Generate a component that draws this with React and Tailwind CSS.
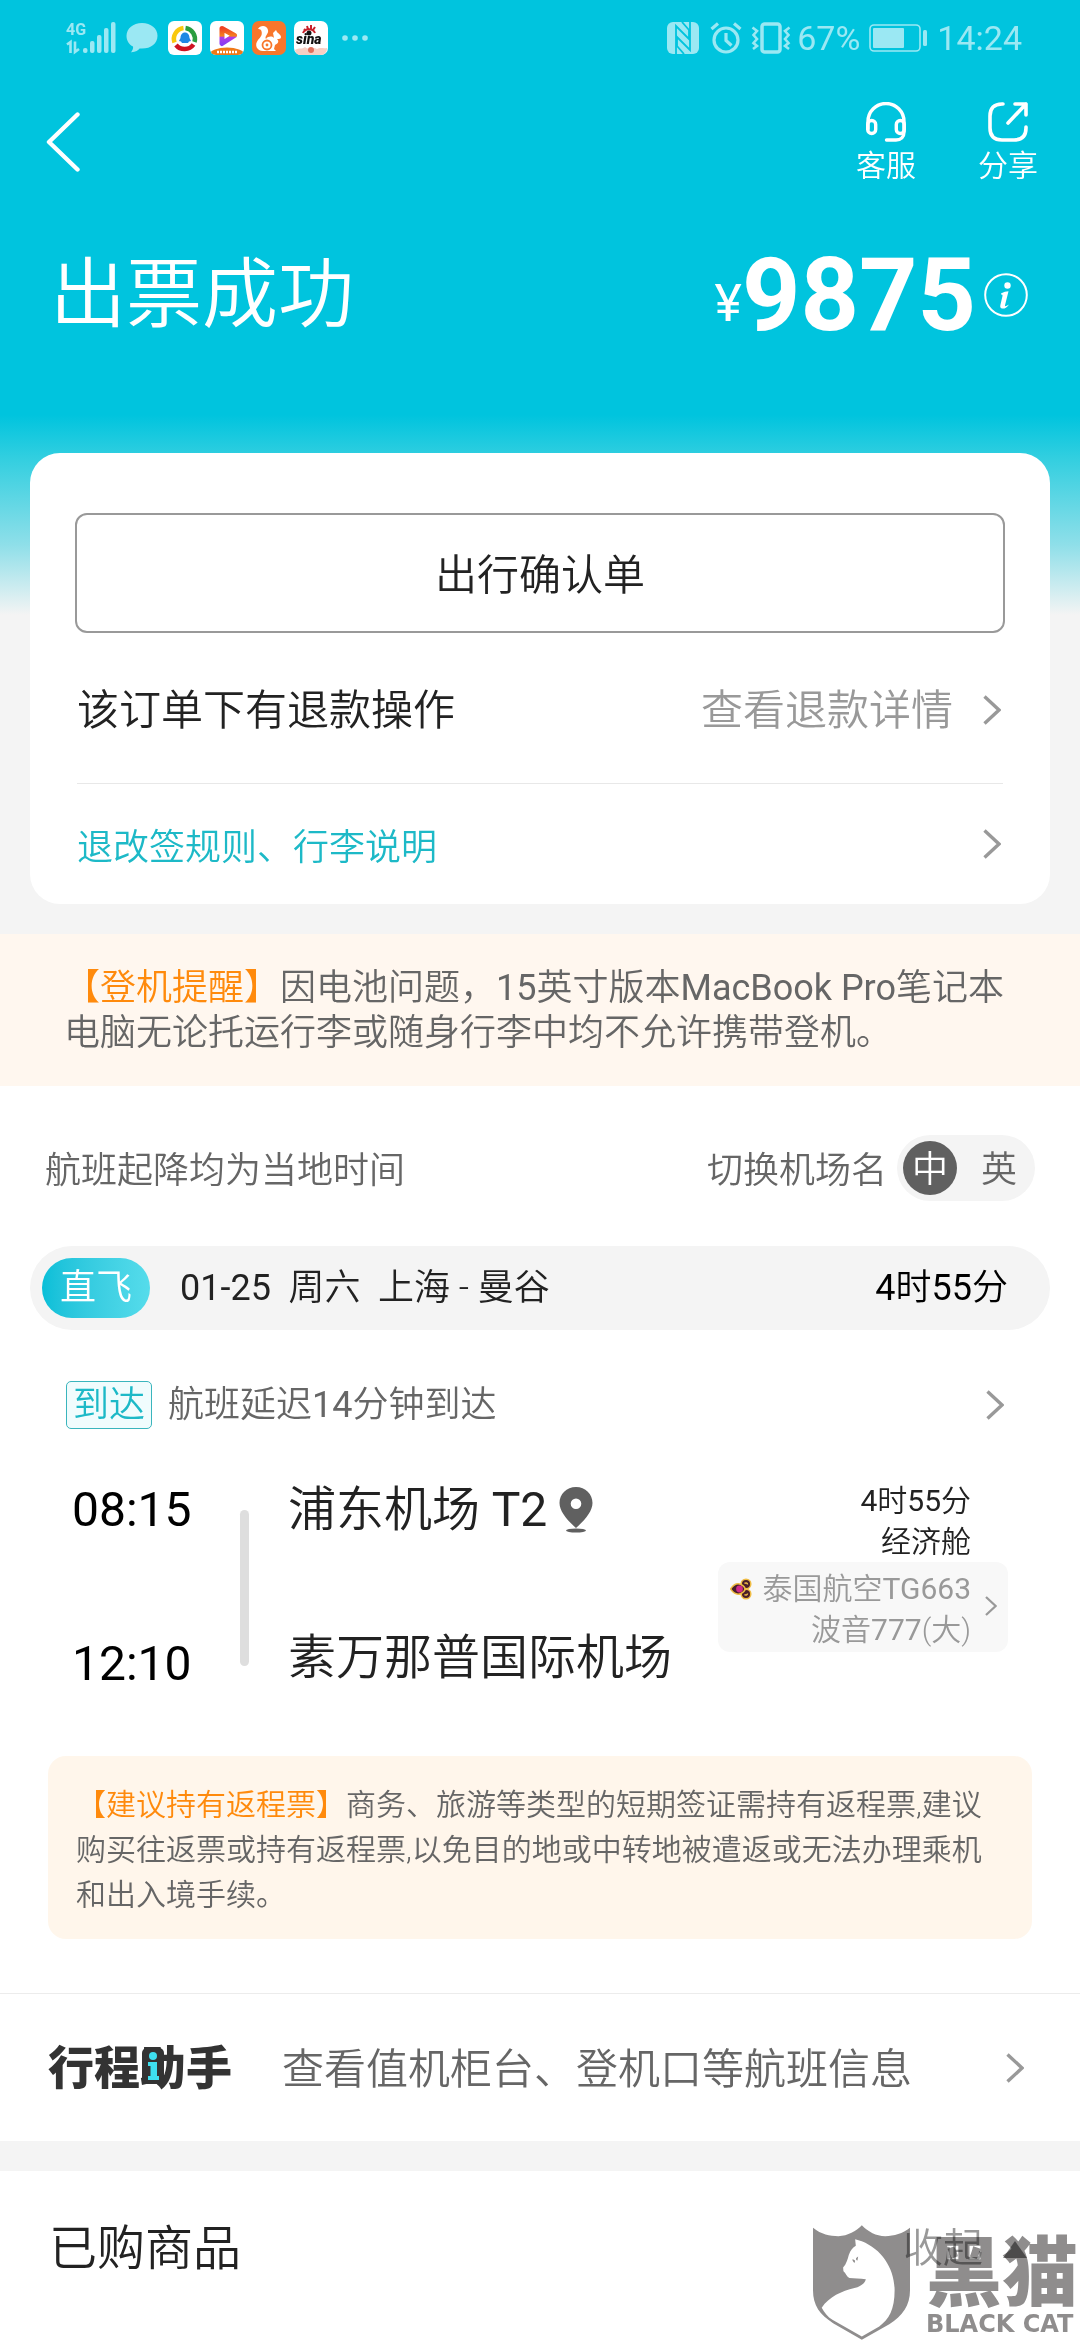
import { useState } from "react";

/* CJK glyphs use the page's lighter weight; Latin letters and digits keep the regular one. */
function Mixed({ children }) {
  return children
    .split(/([0-9A-Za-z][0-9A-Za-z\-]*)/)
    .map((part, i) =>
      i % 2 ? (
        <span key={i} className="font-normal">{part}</span>
      ) : (
        part
      )
    );
}

function Chevron({ className = "h-[30px] w-[18px]" }) {
  return (
    <svg viewBox="0 0 18 30" className={className} fill="none" stroke="#999" strokeWidth="3.4" aria-hidden="true">
      <path d="M1.5 1.5 16 15 1.5 28.5" />
    </svg>
  );
}

function SignalIcon() {
  return (
    <svg viewBox="0 0 50 34" className="h-[34px] w-[50px]" aria-label="4G">
      <text x="0" y="14" fontFamily="Roboto, sans-serif" fontWeight="700" fontSize="16" fill="#9be8f3">4G</text>
      <g stroke="#9be8f3" strokeWidth="2.6" fill="none">
        <path d="M1 23.500 4.500 21V32M9 20.500V31l4-3" />
      </g>
      <g fill="#9be8f3">
        <rect x="17" y="27" width="4.500" height="5" rx="2" />
        <rect x="24" y="20" width="4.500" height="12" rx="2" />
        <rect x="31" y="14" width="4.500" height="18" rx="2" />
        <rect x="38" y="7" width="4.500" height="25" rx="2" />
        <rect x="45" y="1" width="4.500" height="31" rx="2" />
      </g>
    </svg>
  );
}

function StatusBar() {
  return (
    <div className="flex h-[76px] items-center justify-between pl-[66px] pr-[58px] font-normal text-[#9be8f3]">
      <div className="flex items-center gap-2">
        <SignalIcon />
        <svg viewBox="0 0 32 32" className="mx-[2px] h-8 w-8" fill="#9be8f3" aria-hidden="true">
          <path d="M16 1C7 1 .5 6.500.5 13.800c0 5 2.500 8.700 6.500 10.800.5 2-.7 4.200-2 5.600 4.500.2 7.300-2.200 8.600-3.700C24 27.500 31.500 22 31.500 13.800 31.500 6.500 25 1 16 1z" />
        </svg>
        <svg viewBox="0 0 34 34" className="h-[34px] w-[34px]" aria-hidden="true">
          <rect width="34" height="34" rx="6" fill="#fff" />
          <g fill="none" strokeWidth="4.500">
            <path d="M6.500 21.500A11 11 0 0 1 15.500 7" stroke="#f9c80e" />
            <path d="M17.500 7A11 11 0 0 1 26.500 21" stroke="#2a9d3f" />
            <path d="M25.500 23.500A11 11 0 0 1 8 24" stroke="#cf1322" />
          </g>
          <path d="M17 11.500c3 0 4.500 2.500 4.500 5.500l1.500 3-2 .5-1 1.500h-6l-1-1.500-2-.5 1.500-3c0-3 1.500-5.500 4.500-5.500z" fill="#1e88e5" />
        </svg>
        <svg viewBox="0 0 34 34" className="h-[34px] w-[34px]" aria-hidden="true">
          <defs>
            <clipPath id="player"><rect width="34" height="34" rx="6" /></clipPath>
            <linearGradient id="play" x1="0" y1="0" x2="0" y2="1">
              <stop offset="0" stopColor="#ef4423" />
              <stop offset="0.5" stopColor="#f58220" />
              <stop offset="0.6" stopColor="#b03be8" />
              <stop offset="1" stopColor="#8b3df0" />
            </linearGradient>
          </defs>
          <g clipPath="url(#player)">
            <rect width="34" height="34" fill="#fff" />
            <path d="M12 7.500 24.500 14.500 12 22.500z" fill="none" stroke="url(#play)" strokeWidth="5" strokeLinejoin="round" />
            <ellipse cx="17" cy="33" rx="17" ry="6.500" fill="#ef7918" />
            <path d="M7 31h20" stroke="#fff" strokeWidth="2.500" strokeDasharray="2 1" />
          </g>
        </svg>
        <svg viewBox="0 0 34 34" className="h-[34px] w-[34px]" aria-hidden="true">
          <rect width="34" height="34" rx="7" fill="#f8762b" />
          <path d="M6 8c2-4 9-4 10 1 1 4-4 6-2 9 2-3 6-3 8-1l-1-5 3-3 1 2c1 1 4 3 4 5s-2 2-4 2c3 3 0 5-2 6l-1 4 2 2h-13C5 30 2 24 6 19c3-3 5-6 3-10-1-1-2-1-3-1z" fill="#fff" />
          <circle cx="15" cy="24" r="4.500" fill="none" stroke="#f8762b" strokeWidth="1.800" />
          <circle cx="15" cy="24" r="1.400" fill="#f8762b" />
        </svg>
        <svg viewBox="0 0 34 34" className="h-[34px] w-[34px]" aria-label="sina">
          <rect width="34" height="34" rx="7" fill="#fff" />
          <path d="M1 29c4-3 7 0 10-3 4 4 8-1 12 2 3-2 6 0 10-1v1a6 6 0 0 1-6 6H7a6 6 0 0 1-6-5z" fill="#f7cfc4" />
          <circle cx="17" cy="29" r="3" fill="#e0705c" />
          <g fill="none" stroke="#c8202a" strokeWidth="2">
            <path d="M9 12c2-5 10-5 12 0M10 8l2 2M13 5l1 3M17 4v4M21 6l-2 3" />
          </g>
          <circle cx="15" cy="12" r="2.500" fill="#111" />
          <text x="2" y="23" fontFamily="Roboto, sans-serif" fontStyle="italic" fontWeight="900" fontSize="14" fill="#111">sina</text>
        </svg>
        <svg viewBox="0 0 26 6" className="ml-1.5 h-1.5 w-[26px]" fill="#9be8f3" aria-hidden="true">
          <circle cx="3" cy="3" r="2.800" />
          <circle cx="13" cy="3" r="2.800" />
          <circle cx="23" cy="3" r="2.800" />
        </svg>
      </div>
      <div className="flex items-center text-[34px] leading-10">
        <svg viewBox="0 0 32 32" className="h-8 w-8" aria-hidden="true">
          <rect width="32" height="32" rx="6" fill="#9be8f3" />
          <g fill="none" stroke="#00c4de" strokeWidth="1.800">
            <path d="M9 32V4L22 17V8L15 0" />
            <path d="M23 0v28L10 15v9l7 8" />
          </g>
        </svg>
        <svg viewBox="0 0 32 32" className="ml-[11px] h-8 w-8" fill="none" stroke="#9be8f3" strokeWidth="3.200" aria-hidden="true">
          <circle cx="16" cy="18" r="12" />
          <path d="M1.500 7 8 1.500M30.500 7 24 1.500M16 11v7.500l5.500 5" />
        </svg>
        <svg viewBox="0 0 40 32" className="ml-[9px] h-8 w-10" fill="none" stroke="#9be8f3" strokeWidth="3" aria-hidden="true">
          <rect x="11" y="2" width="18" height="28" rx="2.500" strokeWidth="3.500" />
          <path d="M1.500 5.500 6 9l-3.500 4L6 17l-3.500 4L6 24l-4 3M38.500 5.500 34 9l3.500 4L34 17l3.500 4L34 24l4 3" strokeWidth="2.600" />
        </svg>
        <span className="ml-1.5">67%</span>
        <svg viewBox="0 0 58 28" className="ml-[9px] h-7 w-[58px]" aria-hidden="true">
          <rect x="1" y="1" width="50" height="26" rx="4" fill="none" stroke="#9be8f3" strokeWidth="1.600" />
          <rect x="4" y="4" width="31" height="20" rx="1" fill="#9be8f3" />
          <rect x="54" y="6" width="4" height="16" rx="1.500" fill="#9be8f3" />
        </svg>
        <span className="ml-2.5">14:24</span>
      </div>
    </div>
  );
}

function Header() {
  return (
    <header className="text-white">
      <StatusBar />
      <nav className="flex h-[132px] items-center justify-between pl-[46px] pr-[42px]">
        <button type="button" aria-label="返回">
          <svg viewBox="0 0 34 60" className="h-[60px] w-[34px]" fill="none" stroke="currentColor" strokeWidth="4.400" strokeLinecap="round" strokeLinejoin="round">
            <path d="M31.500 2.500 3 30l28.500 27.500" />
          </svg>
        </button>
        <div className="flex gap-[62px]">
          <button type="button" className="flex flex-col items-center">
            <svg viewBox="0 0 40 40" className="h-10 w-10" fill="none" stroke="currentColor" strokeWidth="3.400" strokeLinecap="round" aria-hidden="true">
              <path d="M2 27V19.500a18 18 0 0 1 36 0V30c0 5-3 8-8 8H20.500" />
              <rect x="1.700" y="18.500" width="8" height="13" rx="4" />
              <rect x="30.300" y="18.500" width="8" height="13" rx="4" />
            </svg>
            <span className="mt-2 text-[30px] leading-8">客服</span>
          </button>
          <button type="button" className="flex flex-col items-center">
            <svg viewBox="0 0 40 40" className="h-10 w-10" fill="none" stroke="currentColor" strokeWidth="3.600" strokeLinecap="round" aria-hidden="true">
              <path d="M15 2h-1C6 2 2 6 2 14v12c0 8 4 12 12 12h12c8 0 12-4 12-12v-1" />
              <path d="M27 2h11v11M38 2 20 21" strokeLinejoin="round" />
            </svg>
            <span className="mt-2 text-[30px] leading-8">分享</span>
          </button>
        </div>
      </nav>
      <div className="flex h-[174px] items-center justify-between pl-[50px] pr-[52px]">
        <h1 className="text-[76px] leading-[100px]">出票成功</h1>
        <div className="flex items-center">
          <p className="flex items-end">
            <span className="mb-4 text-[52px] font-normal leading-none">¥</span>
            <strong className="text-[102px] font-bold leading-none">9875</strong>
          </p>
          <button type="button" aria-label="价格明细" className="ml-2">
            <svg viewBox="0 0 44 44" className="h-11 w-11">
              <circle cx="22" cy="22" r="20.800" fill="none" stroke="#fff" strokeWidth="2" />
              <circle cx="23.500" cy="12.500" r="3.200" fill="#fff" />
              <path d="M17 20.500c3-1.500 5-2 7.500-2.200l-3.500 14c-.3 1.500 1 1 4-.8-2.500 3.500-5 4.500-7 4-2-.4-2-2-1.500-4l2-8.500c.2-1.200-.5-1.600-1.500-1.500z" fill="#fff" />
            </svg>
          </button>
        </div>
      </div>
    </header>
  );
}

function OrderCard() {
  return (
    <section className="mx-[30px] mb-[30px] mt-[71px] rounded-[30px] bg-white px-[45px] pt-[60px]">
      <button type="button" className="h-[120px] w-full rounded-xl border-2 border-[#999] pt-1 text-[42px] text-[#222]">出行确认单</button>
      <a href="#refund" className="mx-0.5 flex h-[151px] items-center justify-between border-b border-[#e8e8e8] pt-1 text-[42px] text-[#222]">
        <span>该订单下有退款操作</span>
        <span className="flex items-center gap-[30px] pr-0.5 text-[#999]">
          查看退款详情
          <Chevron />
        </span>
      </a>
      <a href="#rules" className="mx-0.5 flex h-[120px] items-center justify-between pr-0.5 text-[36px] text-[#1db9c7]">
        <span className="pt-2">退改签规则、行李说明</span>
        <Chevron />
      </a>
    </section>
  );
}

function LanguageToggle() {
  const [lang, setLang] = useState("中");
  return (
    <div className="flex h-[66px] items-center gap-3 rounded-full bg-[#f4f4f4] px-1.5">
      {["中", "英"].map((item) => (
        <button
          key={item}
          type="button"
          aria-pressed={lang === item}
          onClick={() => setLang(item)}
          className={
            lang === item
              ? "h-[54px] w-[54px] rounded-full bg-[#606060] pt-1 leading-[50px] text-white"
              : "h-[54px] w-[60px] rounded-full pt-1 leading-[50px] text-[#666]"
          }
        >
          {item}
        </button>
      ))}
    </div>
  );
}

function FlightDetails() {
  return (
    <div className="mt-12 flex pl-[72px] pr-[72px]">
      <div className="flex h-[214px] w-[168px] shrink-0 flex-col justify-between text-[48px] font-normal leading-[52px] text-black">
        <time className="mt-1">08:15</time>
        <time className="mb-1">12:10</time>
      </div>
      <div className="mb-7 mt-[30px] w-[9px] shrink-0 rounded-full bg-[#dedede]" />
      <div className="ml-[39px] flex grow flex-col gap-[92px] whitespace-nowrap pt-0.5 text-[48px] leading-[56px] text-[#222]">
        <p className="flex items-center">
          <span>
            <Mixed>浦东机场 T2</Mixed>
          </span>
          <svg viewBox="0 0 34 46" className="ml-3 h-[46px] w-[34px]" fill="#606060" aria-hidden="true">
            <path fillRule="evenodd" d="M17 0C7.500 0 .5 7 .5 16c0 8 7 16.500 16.500 25C26.500 32.500 33.500 24 33.500 16 33.500 7 26.500 0 17 0zm0 11.500a5.300 5.300 0 1 1 0 10.600 5.300 5.300 0 0 1 0-10.600z" />
            <ellipse cx="17" cy="43.500" rx="10" ry="2" />
          </svg>
        </p>
        <p>素万那普国际机场</p>
      </div>
      <div className="shrink-0 text-right text-[30px] leading-[41px] text-[#222]">
        <div className="pr-[37px]">
          <p><Mixed>4时55分</Mixed></p>
          <p>经济舱</p>
        </div>
        <a href="#airline" className="flex items-center rounded-xl bg-[#f8f8f8] pb-[2px] pl-3 pr-[11px] pt-1.5 text-[#999]">
          <svg viewBox="0 0 22 22" className="mb-10 h-[22px] w-[22px]" aria-hidden="true">
            <g stroke="#f0bd45" strokeWidth="1.500" fill="#4a1f2a">
              <circle cx="16" cy="6" r="4.800" />
              <circle cx="16" cy="16" r="4.800" />
              <path d="M.5 11C4 6 8 5 11 6.500c3 1.500 4 3 4 4.500s-1 3-4 4.500C8 17 4 16 .5 11z" />
            </g>
            <circle cx="9.500" cy="11" r="3.400" fill="#d12a8a" />
            <path d="M14.500 5.500c1-1 3-.5 3 1M14.500 16.500c1 1 3 .5 3-1" fill="none" stroke="#f0bd45" strokeWidth="1.500" />
          </svg>
          <span className="ml-2.5">
            <Mixed>泰国航空TG663</Mixed>
            <br />
            <Mixed>波音777(大)</Mixed>
          </span>
          <Chevron className="mb-1.5 ml-3.5 h-5 w-3" />
        </a>
      </div>
    </div>
  );
}

function FlightSection() {
  return (
    <section className="bg-white pb-[54px] text-[36px]">
      <div className="flex items-center justify-between px-[45px] pt-[49px] text-[#666]">
        <p className="pt-1.5">航班起降均为当地时间</p>
        <div className="flex items-center gap-2.5">
          <span className="pt-1.5">切换机场名</span>
          <LanguageToggle />
        </div>
      </div>
      <div className="mx-[30px] mt-[45px] flex h-[84px] items-center rounded-full bg-[#f4f4f4] pl-3 pr-[42px] text-[#222]">
        <span className="flex h-[60px] w-[108px] items-center justify-center rounded-full bg-gradient-to-r from-[#06bfd8] to-[#55dceb] text-white">直飞</span>
        <span className="ml-[30px] grow whitespace-pre"><Mixed>01-25  周六  上海 - 曼谷</Mixed></span>
        <span className="text-black"><Mixed>4时55分</Mixed></span>
      </div>
      <a href="#status" className="mt-12 flex items-center pl-[66px] pr-[76px] text-[#666]">
        <span className="rounded-[5px] border border-[#3ab5bd] bg-[#f0fcfd] px-1.5 leading-[46px] text-[#1db9c7]">到达</span>
        <span className="ml-4 grow"><Mixed>航班延迟14分钟到达</Mixed></span>
        <Chevron />
      </a>
      <FlightDetails />
      <p className="mx-12 mt-[62px] rounded-[18px] bg-[#fff6eb] px-7 pb-[22px] pt-[26px] text-[30px] leading-[45px] text-[#666]">
        <span className="text-[#ff8a0c]">【建议持有返程票】</span>
        商务、旅游等类型的短期签证需持有返程票,建议购买往返票或持有返程票,以免目的地或中转地被遣返或无法办理乘机和出入境手续。
      </p>
    </section>
  );
}

function AssistantRow() {
  return (
    <a href="#assistant" className="flex h-[148px] items-center border-t border-[#ececec] bg-white pl-[48px] pr-[56px]">
      <span className="relative text-[46px] font-black leading-[56px] text-[#333]">
        行程助手
        <svg viewBox="0 0 22 36" className="absolute left-[94px] top-2 h-9 w-[22px]" aria-hidden="true">
          <rect width="22" height="36" rx="5" fill="#333" />
          <circle cx="11" cy="8" r="4" fill="#3ee0f0" />
          <path d="M6 14h9v14h2v4H6v-4h2.500V18H6z" fill="#3ee0f0" />
        </svg>
      </span>
      <span className="ml-[50px] grow pt-1 text-[42px] text-[#666]">查看值机柜台、登机口等航班信息</span>
      <Chevron />
    </a>
  );
}

function Watermark() {
  return (
    <div className="pointer-events-none absolute bottom-0 right-0.5 flex items-end gap-4 text-[#8f8d8d] mix-blend-multiply">
      <svg viewBox="0 0 290 343" className="h-[115px] w-[97px]" fill="currentColor" aria-hidden="true">
        <path d="M0 8C25 28 50 33 76 33 105 31 128 18 146 0c20 20 42 32 70 33 27 0 52-8 74-25v187c0 45-22 77-62 101l-82 47-86-50C20 268 0 240 0 195z" />
        <path fill="#fff" d="M126 42l20 6c60 24 98 82 98 147 0 58-17 87-46 108l-52 30-88-50c-14-8-24-22-32-36 22-33 60-50 98-59 17-4 30-12 34-26-18-4-34-2-49-4-10-5-10-14-18-20l-1-11c10-12 13-24 17-38 5-14 12-22 21-27z" />
        <path d="M117 103c4-1 7 1 9 4l-2 6c-3-3-5-5-7-10zM129 98l6-4-2 12c-4-1-5-4-4-8z" />
      </svg>
      <div className="pb-1">
        <p className="text-[76px] font-black leading-[76px]">黑猫</p>
        <p className="font-['DejaVu_Sans',sans-serif] text-[24px] font-bold leading-6">BLACK CAT</p>
      </div>
    </div>
  );
}

export default function App() {
  return (
    <main className="relative min-h-screen overflow-hidden bg-white font-[Roboto,'Noto_Sans_CJK_SC',sans-serif] font-[350]" lang="zh-CN">
      <div className="flow-root bg-[#f4f4f4] bg-[linear-gradient(to_bottom,#00c4de_0,#00c4de_415px,#34cfe0_460px,#8fdfe9_545px,#f4f4f4_615px)]">
        <Header />
        <OrderCard />
      </div>
      <p className="bg-[#fff7ef] pb-[30px] pl-16 pr-[70px] pt-[32px] text-[36px] leading-[45px] text-[#666]">
        <span className="text-[#ff8a0c]">【登机提醒】</span>
        <Mixed>因电池问题，15英寸版本MacBook Pro笔记本电脑无论托运行李或随身行李中均不允许携带登机。</Mixed>
      </p>
      <FlightSection />
      <AssistantRow />
      <section className="border-t-[30px] border-[#f4f4f4]">
        <div className="flex h-[156px] items-center justify-between pl-[49px] pr-[53px]">
          <h2 className="text-[48px] text-[#222]">已购商品</h2>
          <button type="button" className="flex items-center gap-5 text-[40px] text-[#999]">
            收起
            <svg viewBox="0 0 24 17" className="h-[17px] w-6" fill="#888" aria-hidden="true">
              <path d="M12 0 24 17H0z" />
            </svg>
          </button>
        </div>
      </section>
      <Watermark />
    </main>
  );
}
